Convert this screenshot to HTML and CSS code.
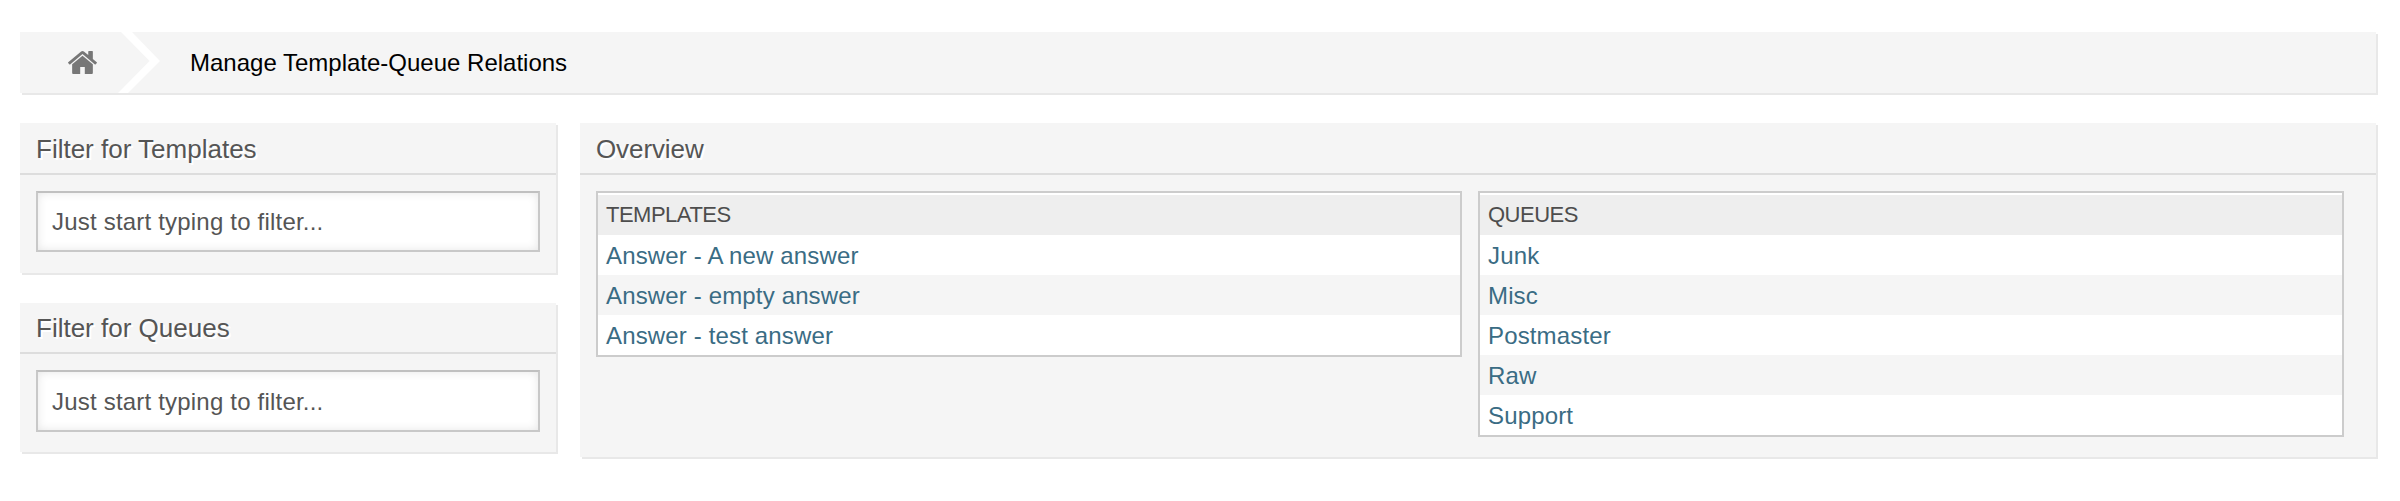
FILE: index.html
```
<!DOCTYPE html>
<html lang="en">
<head>
<meta charset="utf-8">
<title>Manage Template-Queue Relations</title>
<link rel="stylesheet" href="styles.css">
</head>
<body>
<nav class="breadcrumb">
  <a class="home" aria-label="Home"><svg width="29" height="23" viewBox="25 253 1614 1283" preserveAspectRatio="none"><path fill="#777" d="M1408 992v480q0 26-19 45t-45 19h-384v-384h-256v384h-384q-26 0-45-19t-19-45v-480q0-1 .5-3t.5-3l575-474 575 474q1 2 1 6zm223-69l-62 74q-8 9-21 11h-3q-13 0-21-7l-692-577-692 577q-12 8-24 7-13-2-21-11l-62-74q-8-10-7-23.5t11-21.5l719-599q32-26 76-26t76 26l244 204v-195q0-14 9-23t23-9h192q14 0 23 9t9 23v408l219 182q10 8 11 21.5t-7 23.5z"/></svg></a>
  <svg class="chevron" width="43" height="61" viewBox="0 0 43 61"><path fill="#fff" d="M3 0H14L42 29L10 61H0L31.500 29Z"/></svg>
  <span class="crumb">Manage Template-Queue Relations</span>
</nav>
<main class="columns">
  <aside class="sidebar">
    <section class="panel">
      <h2 class="title filter-title">Filter for Templates</h2>
      <div class="body"><input class="filter" type="text" placeholder="Just start typing to filter..."></div>
    </section>
    <section class="panel second">
      <h2 class="title filter-title">Filter for Queues</h2>
      <div class="body"><input class="filter" type="text" placeholder="Just start typing to filter..."></div>
    </section>
  </aside>
  <section class="panel overview">
    <h2 class="title">Overview</h2>
    <div class="lists">
      <ul class="list">
        <li class="head">TEMPLATES</li>
        <li><a>Answer - A new answer</a></li>
        <li><a>Answer - empty answer</a></li>
        <li><a>Answer - test answer</a></li>
      </ul>
      <ul class="list">
        <li class="head">QUEUES</li>
        <li><a>Junk</a></li>
        <li><a>Misc</a></li>
        <li><a>Postmaster</a></li>
        <li><a>Raw</a></li>
        <li><a>Support</a></li>
      </ul>
    </div>
  </section>
</main>
</body>
</html>
```
FILE: styles.css
```
* { box-sizing: border-box; }
body {
  margin: 0;
  min-height: 501px;
  padding: 32px 24px 0 20px;
  background: #fff;
  font-family: "Liberation Sans", Arial, sans-serif;
  font-size: 24px;
  color: #555;
}
.breadcrumb {
  display: flex;
  align-items: center;
  height: 61px;
  background: #f5f5f5;
  box-shadow: 2px 2px 0 #e8e8e8;
}
.home { display: flex; width: 98px; padding-left: 48px; }
.chevron { flex: none; }
.crumb {
  padding-left: 29px;
  color: #000;
}
.columns {
  display: flex;
  align-items: flex-start;
  gap: 24px;
  margin-top: 30px;
}
.sidebar {
  display: flex;
  flex-direction: column;
  gap: 30px;
  width: 536px;
}
.panel {
  height: 150px;
  background: #f5f5f5;
  box-shadow: 2px 2px 0 #e8e8e8;
}
.title {
  height: 52px;
  margin: 0;
  padding: 0 16px;
  border-bottom: 2px solid #ddd;
  font-size: 26px;
  font-weight: normal;
  line-height: 52px;
  text-shadow: 2px 2px 0 #fff;
}
.body { padding: 16px; }
.filter {
  display: block;
  width: 504px;
  height: 61px;
  padding: 0 14px;
  border: 2px solid #c8c8c8;
  border-top-color: #c0c0c0;
  background: #fff;
  box-shadow: inset 0 0 10px #e6e6e6;
  font: inherit;
  letter-spacing: 0.2px;
  color: #555;
}
.filter::placeholder { color: #555; opacity: 1; }
.second { height: 149px; }
.second .title { height: 51px; line-height: 51px; }
.second .filter { height: 62px; padding-top: 1px; }
.overview { flex: 1; height: 334px; }
.overview .title { letter-spacing: -0.1px; }
.lists {
  display: grid;
  grid-template-columns: 866px 866px;
  align-items: start;
  gap: 16px;
  padding: 16px;
}
.list {
  margin: 0;
  padding: 2px 0 0;
  border: 2px solid #ccc;
  background: #fff;
  list-style: none;
}
.list li { height: 40px; padding-left: 8px; line-height: 41px; letter-spacing: 0.15px; }
.list li:nth-child(odd) { background: #f5f5f5; }
.list li:nth-child(even) { background: #fff; }
.list .head:first-child { background: #eee; color: #4d4d4d; font-size: 22px; letter-spacing: -0.5px; line-height: 40px; }
.list a { color: #3a6c84; }
```
